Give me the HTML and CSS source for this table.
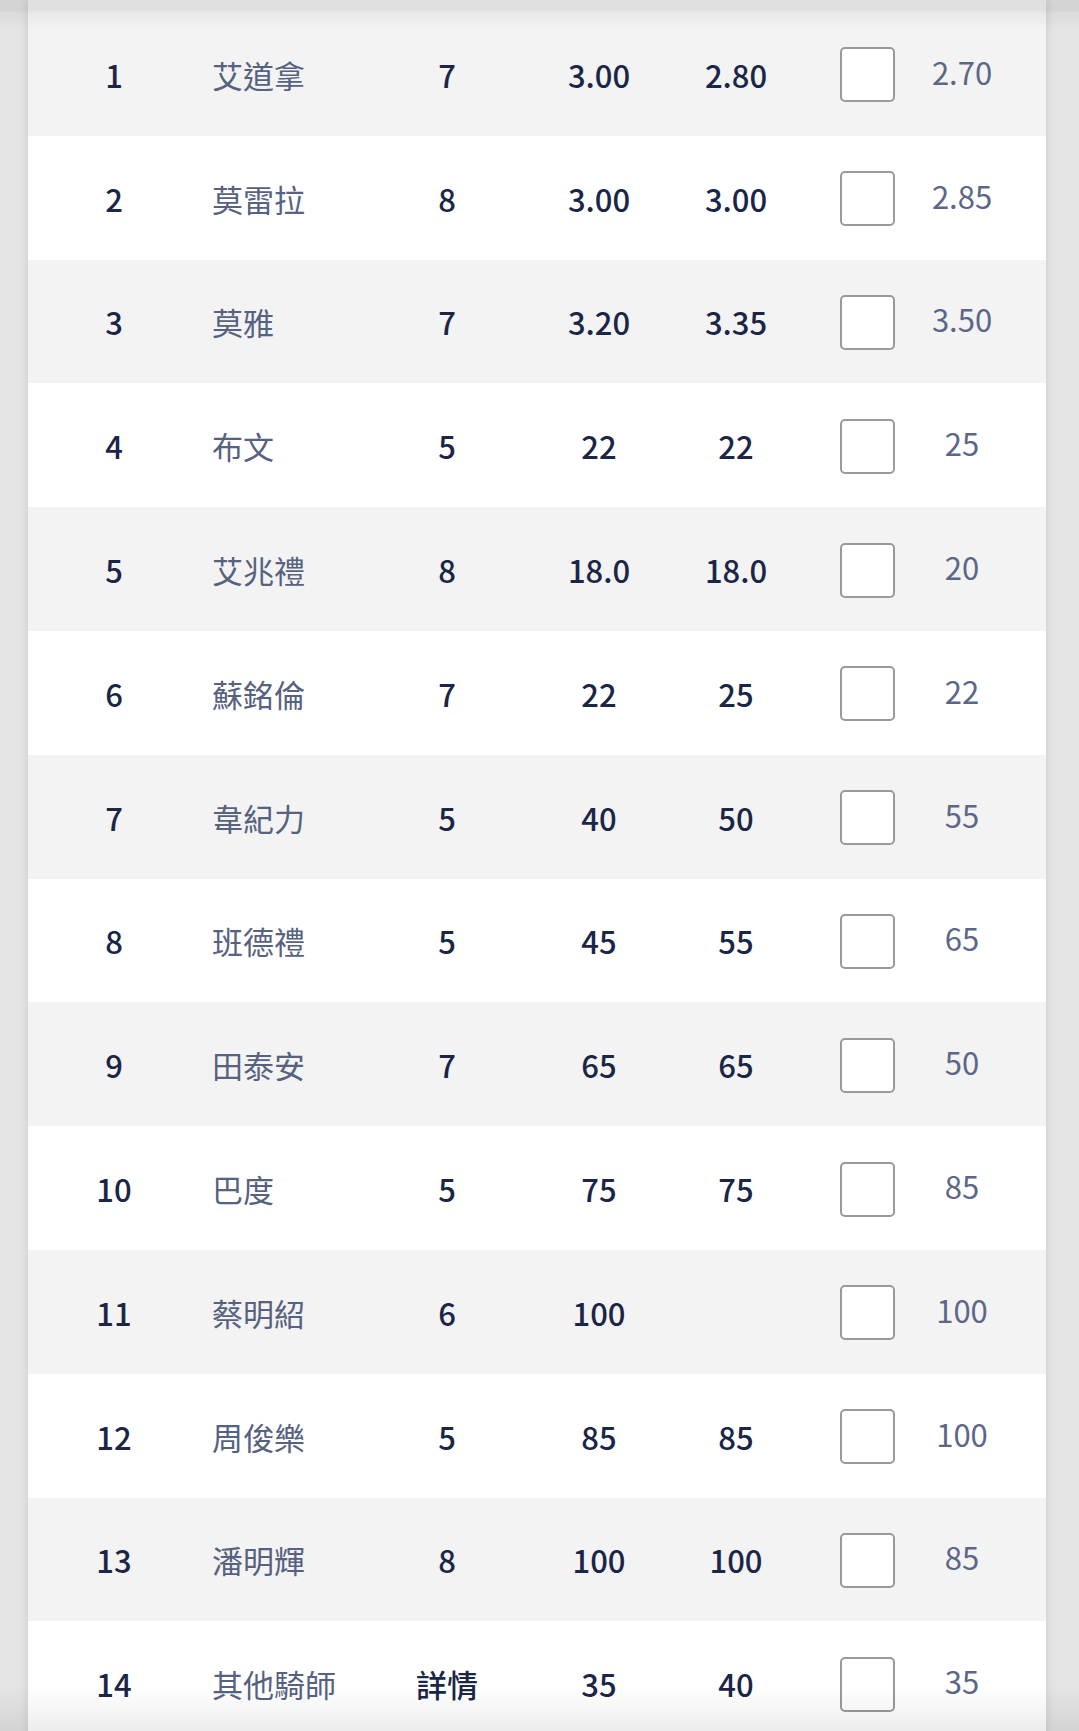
FILE: index.html
```html
<!DOCTYPE html>
<html lang="zh-Hant">
<head>
<meta charset="utf-8">
<title>Odds</title>
<link rel="stylesheet" href="styles.css">
</head>
<body>
<div class="top-shade"></div>
<main class="card">
  <div class="card-top"></div>
  <div class="row odd"><div class="c no">1</div><div class="c name">艾道拿</div><div class="c num">7</div><div class="c num">3.00</div><div class="c num">2.80</div><div class="c box"><span class="chk"></span></div><div class="c last">2.70</div></div>
  <div class="row"><div class="c no">2</div><div class="c name">莫雷拉</div><div class="c num">8</div><div class="c num">3.00</div><div class="c num">3.00</div><div class="c box"><span class="chk"></span></div><div class="c last">2.85</div></div>
  <div class="row odd"><div class="c no">3</div><div class="c name">莫雅</div><div class="c num">7</div><div class="c num">3.20</div><div class="c num">3.35</div><div class="c box"><span class="chk"></span></div><div class="c last">3.50</div></div>
  <div class="row"><div class="c no">4</div><div class="c name">布文</div><div class="c num">5</div><div class="c num">22</div><div class="c num">22</div><div class="c box"><span class="chk"></span></div><div class="c last">25</div></div>
  <div class="row odd"><div class="c no">5</div><div class="c name">艾兆禮</div><div class="c num">8</div><div class="c num">18.0</div><div class="c num">18.0</div><div class="c box"><span class="chk"></span></div><div class="c last">20</div></div>
  <div class="row"><div class="c no">6</div><div class="c name">蘇銘倫</div><div class="c num">7</div><div class="c num">22</div><div class="c num">25</div><div class="c box"><span class="chk"></span></div><div class="c last">22</div></div>
  <div class="row odd"><div class="c no">7</div><div class="c name">韋紀力</div><div class="c num">5</div><div class="c num">40</div><div class="c num">50</div><div class="c box"><span class="chk"></span></div><div class="c last">55</div></div>
  <div class="row"><div class="c no">8</div><div class="c name">班德禮</div><div class="c num">5</div><div class="c num">45</div><div class="c num">55</div><div class="c box"><span class="chk"></span></div><div class="c last">65</div></div>
  <div class="row odd"><div class="c no">9</div><div class="c name">田泰安</div><div class="c num">7</div><div class="c num">65</div><div class="c num">65</div><div class="c box"><span class="chk"></span></div><div class="c last">50</div></div>
  <div class="row"><div class="c no">10</div><div class="c name">巴度</div><div class="c num">5</div><div class="c num">75</div><div class="c num">75</div><div class="c box"><span class="chk"></span></div><div class="c last">85</div></div>
  <div class="row odd"><div class="c no">11</div><div class="c name">蔡明紹</div><div class="c num">6</div><div class="c num">100</div><div class="c num"></div><div class="c box"><span class="chk"></span></div><div class="c last">100</div></div>
  <div class="row"><div class="c no">12</div><div class="c name">周俊樂</div><div class="c num">5</div><div class="c num">85</div><div class="c num">85</div><div class="c box"><span class="chk"></span></div><div class="c last">100</div></div>
  <div class="row odd"><div class="c no">13</div><div class="c name">潘明輝</div><div class="c num">8</div><div class="c num">100</div><div class="c num">100</div><div class="c box"><span class="chk"></span></div><div class="c last">85</div></div>
  <div class="row"><div class="c no">14</div><div class="c name">其他騎師</div><div class="c num">詳情</div><div class="c num">35</div><div class="c num">40</div><div class="c box"><span class="chk"></span></div><div class="c last">35</div></div>
</main>
<div class="bottom-shade"></div>
</body>
</html>
```
FILE: styles.css
```css
html, body {
  margin: 0;
  padding: 0;
}
body {
  background: #e5e5e5;
  font-family: "Noto Sans CJK TC", "Noto Sans", sans-serif;
  overflow: hidden;
}
.card {
  margin: 0 33px 0 28px;
  background: #ffffff;
  box-shadow: 0 0 10px rgba(0, 0, 0, 0.12);
}
.card-top {
  height: 12px;
  background: #f3f3f3;
}
.row {
  display: grid;
  grid-template-columns: 172px 162px 170px 134px 140px 122px 68px 1fr;
  align-items: center;
  height: 123.8px;
  background: #ffffff;
}
.row.odd {
  background: #f3f3f3;
}
.c {
  text-align: center;
  font-size: 31px;
  line-height: 1;
  padding-top: 1px;
  white-space: nowrap;
}
.no, .num {
  color: #1b2647;
  font-weight: 500;
}
.name {
  text-align: left;
  padding-left: 12px;
  color: #56627f;
  font-weight: 400;
}
.box {
  display: flex;
  justify-content: center;
  padding-top: 2px;
}
.chk {
  display: block;
  width: 51px;
  height: 51px;
  border: 2px solid #9a9a9a;
  border-radius: 5px;
  background: #ffffff;
}
.last {
  color: #5c6787;
  font-weight: 400;
  padding-top: 0;
  padding-bottom: 5px;
}
.top-shade {
  position: fixed;
  left: 0;
  right: 0;
  top: 0;
  height: 30px;
  background: linear-gradient(rgba(0, 0, 0, 0.075) 0, rgba(0, 0, 0, 0.075) 10px, rgba(0, 0, 0, 0.04) 13px, rgba(0, 0, 0, 0) 30px);
  pointer-events: none;
}
.bottom-shade {
  position: fixed;
  left: 0;
  right: 0;
  bottom: 0;
  height: 45px;
  background: linear-gradient(rgba(0, 0, 0, 0), rgba(0, 0, 0, 0.07));
  pointer-events: none;
}
```
